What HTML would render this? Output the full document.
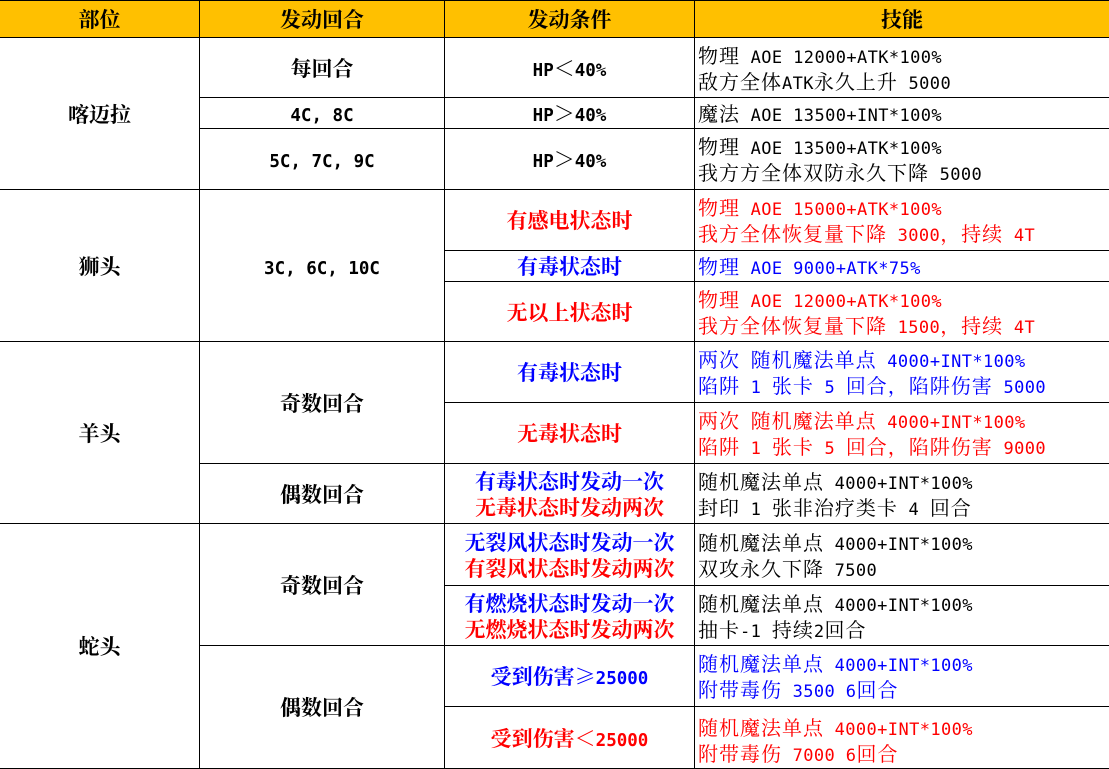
<!DOCTYPE html>
<html><head><meta charset="utf-8"><style>
html,body{margin:0;padding:0;background:#fff;width:1109px;height:762px;overflow:hidden}
table{border-collapse:collapse;table-layout:fixed;width:1110px;position:absolute;left:-1px;top:0}
td,th{border:1px solid #000;padding:0;font-size:21px;font-family:"Noto Serif CJK SC","Liberation Serif",serif;color:#000;text-align:center;font-weight:bold;line-height:26px;overflow:hidden;white-space:nowrap}
th{background:#FFC000;height:36px}
td.s{text-align:left;font-weight:normal;padding-left:3px;font-size:20px;letter-spacing:1px}
i{font-style:normal;font-family:"DejaVu Sans Mono",monospace;font-size:17.5px;line-height:0;letter-spacing:0}
td.s i{font-size:17px;letter-spacing:0.4px}
.r{color:#f00}.b{color:#00f}
</style></head><body>
<table>
<colgroup><col style="width:200px"><col style="width:245px"><col style="width:250px"><col style="width:415px"></colgroup>
<tr><th>部位</th><th>发动回合</th><th>发动条件</th><th>技能</th></tr>
<tr style="height:60px"><td rowspan="3">喀迈拉</td><td>每回合</td><td><i>HP</i>＜<i>40%</i></td><td class="s">物理<i> AOE 12000+ATK*100%</i><br>敌方全体<i>ATK</i>永久上升<i> 5000</i></td></tr>
<tr style="height:31px"><td><i>4C, 8C</i></td><td><i>HP</i>＞<i>40%</i></td><td class="s">魔法<i> AOE 13500+INT*100%</i></td></tr>
<tr style="height:61px"><td><i>5C, 7C, 9C</i></td><td><i>HP</i>＞<i>40%</i></td><td class="s">物理<i> AOE 13500+ATK*100%</i><br>我方方全体双防永久下降<i> 5000</i></td></tr>
<tr style="height:61px"><td rowspan="3">狮头</td><td rowspan="3"><i>3C, 6C, 10C</i></td><td class="r">有感电状态时</td><td class="s r">物理<i> AOE 15000+ATK*100%</i><br>我方全体恢复量下降<i> 3000</i>，持续<i> 4T</i></td></tr>
<tr style="height:31px"><td class="b">有毒状态时</td><td class="s b">物理<i> AOE 9000+ATK*75%</i></td></tr>
<tr style="height:60px"><td class="r">无以上状态时</td><td class="s r">物理<i> AOE 12000+ATK*100%</i><br>我方全体恢复量下降<i> 1500</i>，持续<i> 4T</i></td></tr>
<tr style="height:61px"><td rowspan="3">羊头</td><td rowspan="2">奇数回合</td><td class="b">有毒状态时</td><td class="s b">两次<i> </i>随机魔法单点<i> 4000+INT*100%</i><br>陷阱<i> 1 </i>张卡<i> 5 </i>回合，陷阱伤害<i> 5000</i></td></tr>
<tr style="height:61px"><td class="r">无毒状态时</td><td class="s r">两次<i> </i>随机魔法单点<i> 4000+INT*100%</i><br>陷阱<i> 1 </i>张卡<i> 5 </i>回合，陷阱伤害<i> 9000</i></td></tr>
<tr style="height:60px"><td>偶数回合</td><td><span class="b">有毒状态时发动一次</span><br><span class="r">无毒状态时发动两次</span></td><td class="s">随机魔法单点<i> 4000+INT*100%</i><br>封印<i> 1 </i>张非治疗类卡<i> 4 </i>回合</td></tr>
<tr style="height:62px"><td rowspan="4">蛇头</td><td rowspan="2">奇数回合</td><td><span class="b">无裂风状态时发动一次</span><br><span class="r">有裂风状态时发动两次</span></td><td class="s">随机魔法单点<i> 4000+INT*100%</i><br>双攻永久下降<i> 7500</i></td></tr>
<tr style="height:60px"><td><span class="b">有燃烧状态时发动一次</span><br><span class="r">无燃烧状态时发动两次</span></td><td class="s">随机魔法单点<i> 4000+INT*100%</i><br>抽卡<i>-1 </i>持续<i>2</i>回合</td></tr>
<tr style="height:61px"><td rowspan="2">偶数回合</td><td class="b">受到伤害≥<i>25000</i></td><td class="s b">随机魔法单点<i> 4000+INT*100%</i><br>附带毒伤<i> 3500 6</i>回合</td></tr>
<tr style="height:62px"><td class="r">受到伤害＜<i>25000</i></td><td class="s r" style="vertical-align:top;padding-top:7px">随机魔法单点<i> 4000+INT*100%</i><br>附带毒伤<i> 7000 6</i>回合</td></tr>
</table>
</body></html>
